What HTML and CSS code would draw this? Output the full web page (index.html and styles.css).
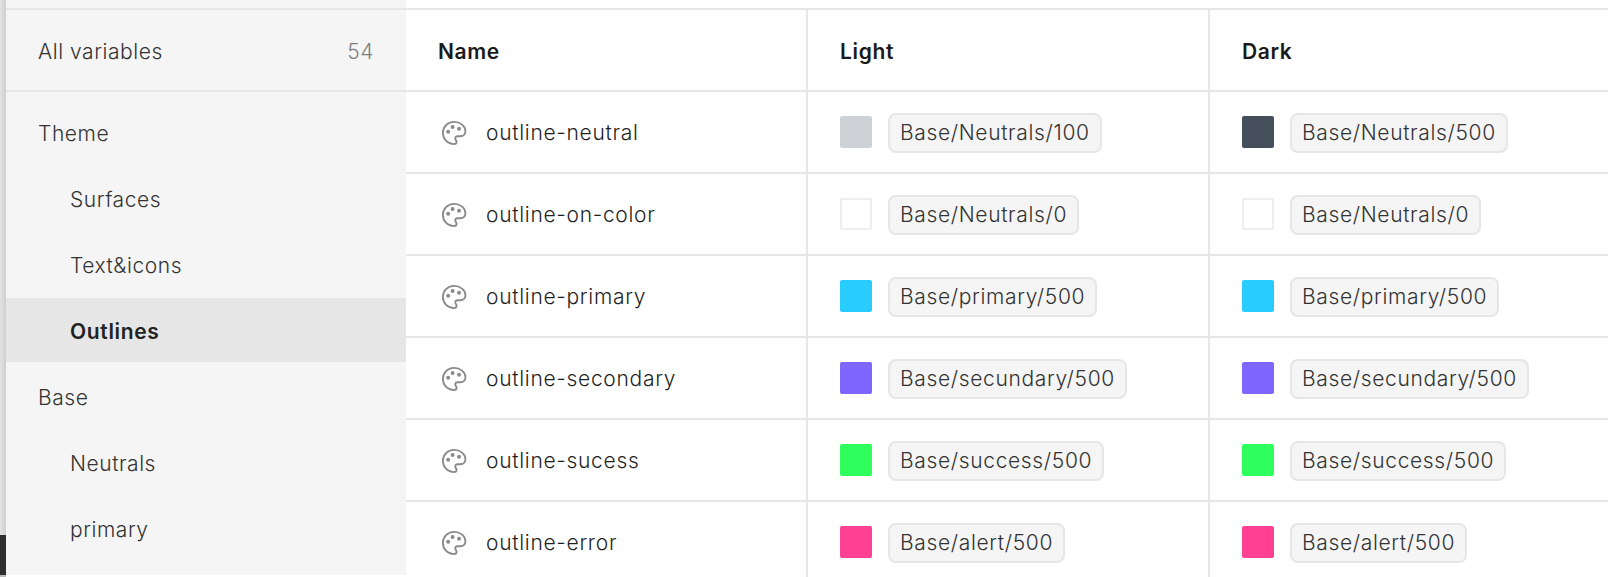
FILE: index.html
```html
<!DOCTYPE html>
<html lang="en">
<head>
  <meta charset="UTF-8" />
  <title>Variables</title>
  <link rel="stylesheet" href="styles.css">
</head>
<body>
  <svg class="defs" width="0" height="0">
    <symbol id="palette" viewBox="0 0 24 24">
      <path d="M12 2.500C6.500 2.500 2.500 6.700 2.500 12s4.200 9.500 9.500 9.500c1.300 0 2.200-.9 2.200-2 0-.6-.3-1-.6-1.500-.3-.4-.5-.8-.5-1.300 0-1.100.9-1.900 2-1.900h2.400c2.500 0 4.300-1.800 4.300-4.300C21.800 6 17.300 2.500 12 2.500z" fill="none" stroke="currentColor" stroke-width="1.600" stroke-linejoin="round"/>
      <circle cx="7" cy="11" r="1.700" fill="currentColor"/>
      <circle cx="10.800" cy="6.800" r="1.700" fill="currentColor"/>
      <circle cx="16.300" cy="8.300" r="1.700" fill="currentColor"/>
    </symbol>
  </svg>

  <div class="page">
    <div class="strip">
      <div class="strip-top"></div>
      <div class="strip-bottom"></div>
    </div>

    <div class="sidebar">
      <div class="all-row">
        <span>All variables</span>
        <span class="count">54</span>
      </div>
      <div class="groups">
        <div class="group">Theme</div>
        <div class="group sub">Surfaces</div>
        <div class="group sub">Text&amp;icons</div>
        <div class="group sub selected">Outlines</div>
        <div class="group">Base</div>
        <div class="group sub">Neutrals</div>
        <div class="group sub">primary</div>
      </div>
    </div>

    <div class="table">
      <div class="row head">
        <div class="cell">Name</div>
        <div class="cell">Light</div>
        <div class="cell">Dark</div>
      </div>

      <div class="row">
        <div class="cell name"><svg class="icon"><use href="#palette"/></svg>outline-neutral</div>
        <div class="cell"><span class="swatch n100"></span><span class="chip">Base/Neutrals/100</span></div>
        <div class="cell"><span class="swatch n500"></span><span class="chip">Base/Neutrals/500</span></div>
      </div>
      <div class="row">
        <div class="cell name"><svg class="icon"><use href="#palette"/></svg>outline-on-color</div>
        <div class="cell"><span class="swatch n0"></span><span class="chip">Base/Neutrals/0</span></div>
        <div class="cell"><span class="swatch n0"></span><span class="chip">Base/Neutrals/0</span></div>
      </div>
      <div class="row">
        <div class="cell name"><svg class="icon"><use href="#palette"/></svg>outline-primary</div>
        <div class="cell"><span class="swatch primary"></span><span class="chip">Base/primary/500</span></div>
        <div class="cell"><span class="swatch primary"></span><span class="chip">Base/primary/500</span></div>
      </div>
      <div class="row">
        <div class="cell name"><svg class="icon"><use href="#palette"/></svg>outline-secondary</div>
        <div class="cell"><span class="swatch secondary"></span><span class="chip">Base/secundary/500</span></div>
        <div class="cell"><span class="swatch secondary"></span><span class="chip">Base/secundary/500</span></div>
      </div>
      <div class="row">
        <div class="cell name"><svg class="icon"><use href="#palette"/></svg>outline-sucess</div>
        <div class="cell"><span class="swatch success"></span><span class="chip">Base/success/500</span></div>
        <div class="cell"><span class="swatch success"></span><span class="chip">Base/success/500</span></div>
      </div>
      <div class="row">
        <div class="cell name"><svg class="icon"><use href="#palette"/></svg>outline-error</div>
        <div class="cell"><span class="swatch alert"></span><span class="chip">Base/alert/500</span></div>
        <div class="cell"><span class="swatch alert"></span><span class="chip">Base/alert/500</span></div>
      </div>
    </div>
  </div>
</body>
</html>
```

FILE: styles.css
```css
body {
  margin: 0;
  background: #fff;
  font-family: Inter, "Liberation Sans", sans-serif;
  font-size: 21px;
  font-weight: 360;
  letter-spacing: 0.55px;
  color: #333;
}

.defs {
  display: block;
  height: 0;
}

.page {
  display: flex;
  height: 577px;
  overflow: hidden;
}

.strip {
  width: 6px;
  display: flex;
  flex-direction: column;
  background: #bbb;
  padding-bottom: 2px;
  box-sizing: border-box;
}
.strip-top {
  flex: 1;
  background: linear-gradient(to right, #e2e2e2, #cfcfcf);
}
.strip-bottom {
  height: 40px;
  background: #2e2e2e;
}

.sidebar {
  width: 400px;
  margin-bottom: 2px;
  padding-top: 8px;
  background: #f5f5f5;
  box-sizing: border-box;
}

.all-row {
  display: flex;
  justify-content: space-between;
  align-items: center;
  height: 78px;
  padding: 2px 32px 0;
  border-top: 2px solid #e6e6e6;
  border-bottom: 2px solid #e6e6e6;
}
.count {
  color: #808080;
}

.groups {
  padding-top: 8px;
}
.group {
  display: flex;
  align-items: center;
  height: 66px;
  padding-left: 32px;
}
.group.sub {
  padding-left: 64px;
}
.group.selected {
  height: 64px;
  margin-bottom: 2px;
  padding-top: 2px;
  box-sizing: border-box;
  background: #e6e6e6;
  font-weight: 600;
  letter-spacing: 0.65px;
  color: #222;
}

.table {
  flex: 1;
  padding-top: 8px;
}

.row {
  display: grid;
  grid-template-columns: 402px 402px 1fr;
  height: 80px;
  border-top: 2px solid #e6e6e6;
}

.cell {
  display: flex;
  align-items: center;
  padding: 1px 0 0 32px;
  border-right: 2px solid #e6e6e6;
  letter-spacing: 0.7px;
  color: #1f1f1f;
}
.cell:last-child {
  border-right: none;
}
.head .cell {
  padding-top: 2px;
  font-weight: 600;
  letter-spacing: 0.65px;
  color: #1a1a1a;
}

.icon {
  width: 28px;
  height: 28px;
  margin: 0 18px 0 2px;
  color: #8a8a8a;
}

.swatch {
  width: 32px;
  height: 32px;
  margin: 0 16px 1px 0;
  border-radius: 2px;
  box-sizing: border-box;
}
.n0 { background: #fff; border: 2px solid #eee; }
.n100 { background: #ced2d6; }
.n500 { background: #454f5b; }
.primary { background: #29ccff; }
.secondary { background: #7f66ff; }
.success { background: #2eff5c; }
.alert { background: #ff4093; }

.chip {
  height: 40px;
  line-height: 36px;
  padding: 0 10px;
  border: 2px solid #e6e6e6;
  border-radius: 8px;
  background: #f5f5f5;
  letter-spacing: 0.65px;
  color: #333;
  box-sizing: border-box;
}
```
